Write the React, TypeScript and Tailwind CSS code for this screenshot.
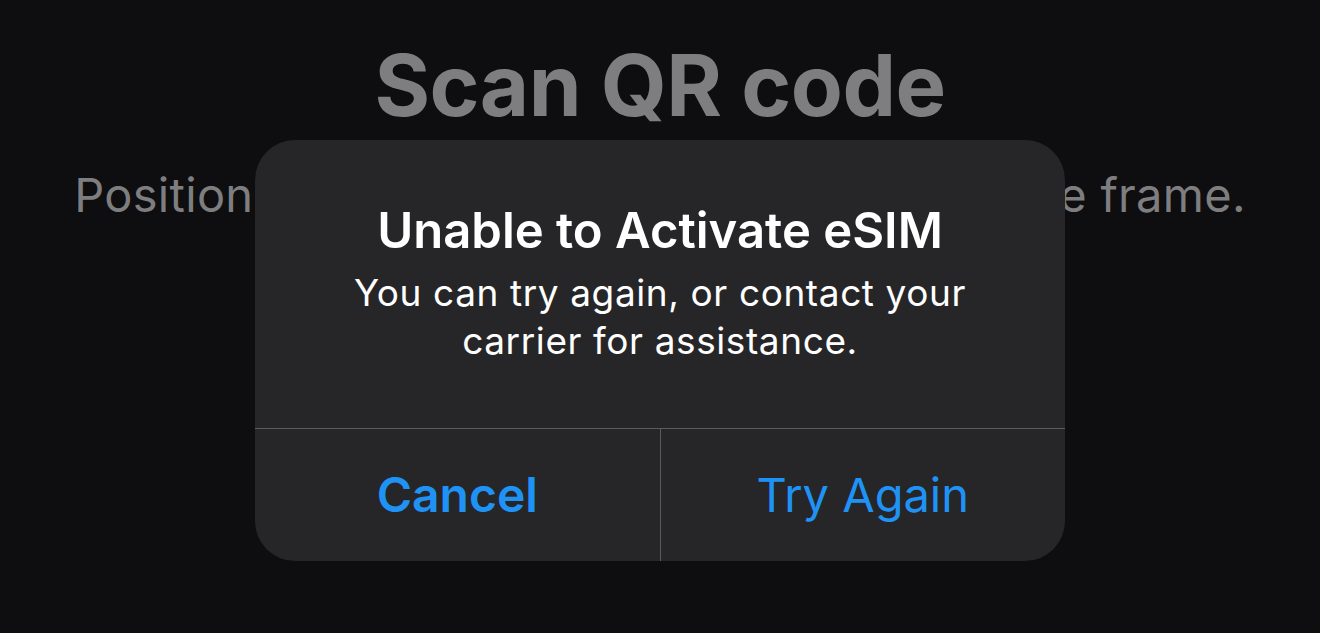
export default function App() {
  return (
    <div
      className="relative h-[633px] w-[1320px] overflow-hidden bg-[#0e0e10]"
      style={{ fontFamily: "Inter, 'Noto Sans', sans-serif" }}
    >
      {/* screen behind the alert */}
      <div className="flex flex-col items-center pt-[35px]">
        <h1 className="text-[85px] font-bold leading-[102px] tracking-[-0.5px] text-[#7e7e80]">
          Scan QR code
        </h1>
        <p className="mt-[30px] whitespace-nowrap text-[47px] leading-[56px] tracking-[0.3px] text-[#7e7e80]">
          Position the QR code so that it appears in the frame.
        </p>
      </div>

      {/* alert */}
      <div className="absolute left-[255px] top-[140px] flex h-[421px] w-[810px] flex-col overflow-hidden rounded-[40px] bg-[#262628]">
        <div className="flex h-[288px] flex-col items-center pt-[61px] text-center text-white">
          <h2 className="text-[49px] font-semibold leading-[60px]">
            Unable to Activate eSIM
          </h2>
          <p className="mt-[8px] text-[37px] leading-[48px] tracking-[0.6px]">
            You can try again, or contact your
            <br />
            carrier for assistance.
          </p>
        </div>
        <div className="flex flex-1 border-t border-[#5b5b5e]">
          <button className="flex flex-1 items-center justify-center border-r border-[#5b5b5e] text-[48px] font-semibold text-[#1f93f5]">
            Cancel
          </button>
          <button className="flex flex-1 items-center justify-center text-[47px] text-[#1f93f5]">
            Try Again
          </button>
        </div>
      </div>
    </div>
  );
}
